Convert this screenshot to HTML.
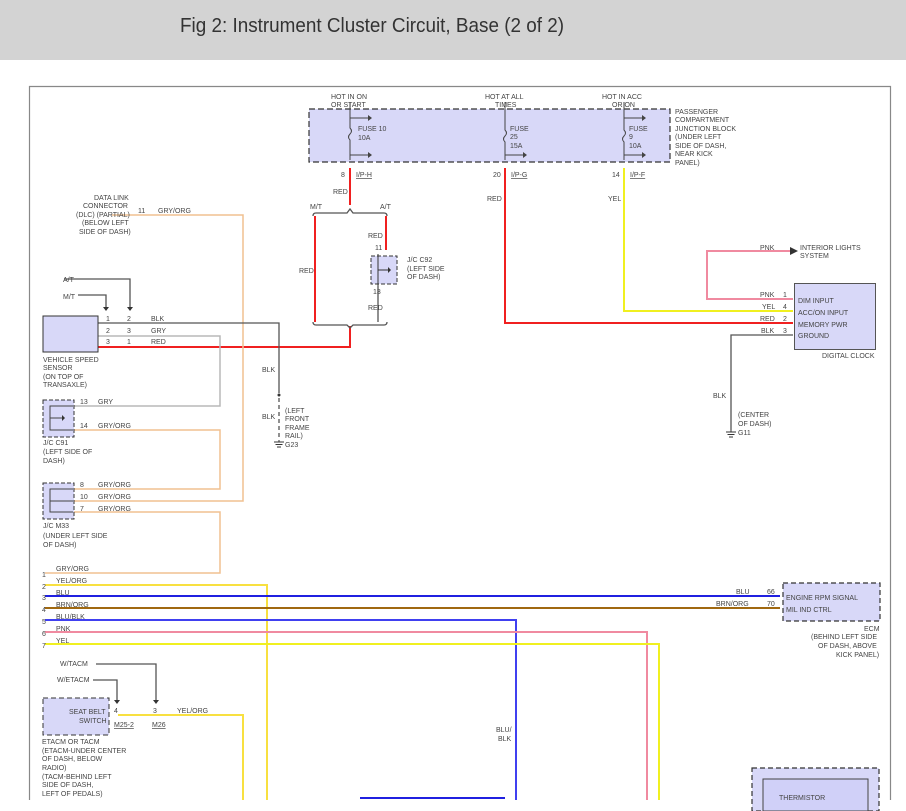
<!DOCTYPE html>
<html><head><meta charset="utf-8"><style>
html,body{margin:0;padding:0;background:#fff;}
svg{display:block;}
text{font-family:"Liberation Sans",sans-serif;font-size:7px;fill:#444;}
</style></head><body>
<svg width="906" height="811" viewBox="0 0 906 811" xmlns="http://www.w3.org/2000/svg">
<rect x="0" y="0" width="906" height="60" fill="#d3d3d3"/>
<text x="180" y="32" style="font-size:20px;fill:#333" textLength="384" lengthAdjust="spacingAndGlyphs">Fig 2: Instrument Cluster Circuit, Base (2 of 2)</text>
<rect x="0" y="60" width="906" height="751" fill="#fff"/>
<path d="M29.5 800 V86.5 H890.5 V800" fill="none" stroke="#888" stroke-width="1.2"/>

<rect x="309" y="109" width="361" height="53" fill="#d8d8f8" stroke="#333" stroke-dasharray="6,3" stroke-width="1.2"/>
<g stroke="#444" fill="none" stroke-width="1">
<path d="M350 102 V128 q3 3 0 6 q-3 3 0 6 V160 M350 118 H368 M350 155 H368"/>
<path d="M505 102 V130 q3 3 0 6 q-3 3 0 6 V160 M505 155 H523"/>
<path d="M624 102 V130 q3 3 0 6 q-3 3 0 6 V160 M624 118 H642 M624 155 H642"/>
</g>
<g fill="#444"><path d="M368 115 l4 3 l-4 3z M368 152 l4 3 l-4 3z M523 152 l4 3 l-4 3z M642 115 l4 3 l-4 3z M642 152 l4 3 l-4 3z"/></g>
<text x="331" y="99">HOT IN ON</text><text x="331" y="107">OR START</text>
<text x="485" y="99">HOT AT ALL</text><text x="495" y="107">TIMES</text>
<text x="602" y="99">HOT IN ACC</text><text x="612" y="107">OR ON</text>
<text x="358" y="131">FUSE 10</text><text x="358" y="140">10A</text>
<text x="510" y="131">FUSE</text><text x="510" y="139">25</text><text x="510" y="148">15A</text>
<text x="629" y="131">FUSE</text><text x="629" y="139">9</text><text x="629" y="148">10A</text>
<text x="675" y="114">PASSENGER</text><text x="675" y="122">COMPARTMENT</text><text x="675" y="131">JUNCTION BLOCK</text><text x="675" y="139">(UNDER LEFT</text><text x="675" y="148">SIDE OF DASH,</text><text x="675" y="156">NEAR KICK</text><text x="675" y="165">PANEL)</text>
<text x="341" y="177">8</text><text x="356" y="177" text-decoration="underline">I/P-H</text>
<text x="493" y="177">20</text><text x="511" y="177" text-decoration="underline">I/P-G</text>
<text x="612" y="177">14</text><text x="630" y="177" text-decoration="underline">I/P-F</text>

<g fill="none" stroke-width="2">
<path d="M350 168 V205" stroke="#f02020"/>
<path d="M315 216 V322" stroke="#f02020"/>
<path d="M386 216 V250" stroke="#f02020"/>
<path d="M350 326 V347 H45" stroke="#f02020"/>
<path d="M505 168 V323 H793" stroke="#f02020"/>
<path d="M624 168 V311 H793" stroke="#f0f020"/>
<path d="M793 299 H707 V251 H790" stroke="#f08aa0"/>
<path d="M112 215 H243 V501 H45" stroke="#f0c090" stroke-width="1.5"/>
<path d="M45 489 H220 V430 H45" stroke="#f0c090" stroke-width="1.5"/>
<path d="M45 512 H220 V573 H45" stroke="#f0c090" stroke-width="1.5"/>
<path d="M45 336 H220 V406 H45" stroke="#b8b8b8" stroke-width="1.5"/>
<path d="M45 585 H267 V800" stroke="#f8e040"/>
<path d="M45 596 H780" stroke="#2020e0"/>
<path d="M45 608 H780" stroke="#a06810"/>
<path d="M45 620 H516 V800" stroke="#4040f0"/>
<path d="M45 632 H647 V800" stroke="#f08aa0"/>
<path d="M45 644 H659 V800" stroke="#f0f020"/>
<path d="M118 715 H243 V800" stroke="#f8e040"/>
<path d="M360 798 H505" stroke="#2020e0"/>
</g>
<g fill="none" stroke="#555" stroke-width="1.3">
<path d="M45 323 H279 V393"/>
<path d="M279 398 V440" stroke-dasharray="4,3"/>
<path d="M793 335 H731 V430"/>
<path d="M313 216 q0-3 3-3 H347 l3-4 l3 4 H384 q3 0 3 3"/>
<path d="M313 322 q0 3 3 3 H347 l3 3 l3-3 H384 q3 0 3-3"/>
<path d="M378 286 V322"/>
<path d="M64 279 H130 V307 M78 295 H106 V307"/>
<path d="M96 664 H156 V700 M93 680 H117 V700"/>
</g>
<g fill="#333">
<path d="M790 247 l8 4 l-8 4z"/>
<path d="M127 307 h6 l-3 4z M103 307 h6 l-3 4z M114 700 h6 l-3 4z M153 700 h6 l-3 4z"/>
<circle cx="279" cy="395" r="1.5"/>
</g>
<g stroke="#333" stroke-width="1"><path d="M274 442 h10 M275.5 444.5 h7 M277 447 h4 M726 432 h10 M727.5 434.5 h7 M729 437 h4 M279 440 v2 M731 430 v2"/></g>
<text x="299" y="273">RED</text><text x="310" y="209">M/T</text><text x="380" y="209">A/T</text>
<text x="368" y="238">RED</text><text x="375" y="250">11</text><text x="373" y="294">13</text><text x="368" y="310">RED</text>
<text x="333" y="194">RED</text><text x="487" y="201">RED</text><text x="608" y="201">YEL</text>
<rect x="371" y="256" width="26" height="28" fill="#d8d8f8" stroke="#333" stroke-dasharray="4,2"/>
<path d="M378 254 V286 M378 270 H388" stroke="#333" fill="none"/><path d="M388 267 l3 3 l-3 3z" fill="#333"/>
<text x="407" y="262">J/C C92</text><text x="407" y="271">(LEFT SIDE</text><text x="407" y="279">OF DASH)</text>
<text x="94" y="200">DATA LINK</text><text x="83" y="208">CONNECTOR</text><text x="76" y="217">(DLC) (PARTIAL)</text><text x="82" y="225">(BELOW LEFT</text><text x="79" y="234">SIDE OF DASH)</text>
<text x="138" y="213">11</text><text x="158" y="213">GRY/ORG</text>
<text x="63" y="282">A/T</text><text x="63" y="299">M/T</text>
<rect x="43" y="316" width="55" height="36" fill="#d8d8f8" stroke="#333"/>
<text x="106" y="321">1</text><text x="127" y="321">2</text><text x="151" y="321">BLK</text>
<text x="106" y="333">2</text><text x="127" y="333">3</text><text x="151" y="333">GRY</text>
<text x="106" y="344">3</text><text x="127" y="344">1</text><text x="151" y="344">RED</text>
<text x="43" y="362">VEHICLE SPEED</text><text x="43" y="370">SENSOR</text><text x="43" y="379">(ON TOP OF</text><text x="43" y="387">TRANSAXLE)</text>
<text x="262" y="372">BLK</text><text x="262" y="419">BLK</text>
<text x="285" y="413">(LEFT</text><text x="285" y="421">FRONT</text><text x="285" y="430">FRAME</text><text x="285" y="438">RAIL)</text><text x="285" y="447">G23</text>
<rect x="43" y="400" width="31" height="37" fill="#d8d8f8" stroke="#333" stroke-dasharray="4,2"/>
<path d="M73 406 H50 V430 H73 M50 418 H62" stroke="#444" fill="none"/><path d="M62 415 l3 3 l-3 3z" fill="#333"/>
<text x="80" y="404">13</text><text x="98" y="404">GRY</text>
<text x="80" y="428">14</text><text x="98" y="428">GRY/ORG</text>
<text x="43" y="445">J/C C91</text><text x="43" y="454">(LEFT SIDE OF</text><text x="43" y="463">DASH)</text>
<rect x="43" y="483" width="31" height="36" fill="#d8d8f8" stroke="#333" stroke-dasharray="4,2"/>
<path d="M73 489 H50 V512 H73 M50 501 H73" stroke="#444" fill="none"/>
<text x="80" y="487">8</text><text x="98" y="487">GRY/ORG</text>
<text x="80" y="499">10</text><text x="98" y="499">GRY/ORG</text>
<text x="80" y="511">7</text><text x="98" y="511">GRY/ORG</text>
<text x="43" y="528">J/C M33</text><text x="43" y="538">(UNDER LEFT SIDE</text><text x="43" y="547">OF DASH)</text>
<text x="56" y="571">GRY/ORG</text><text x="56" y="583">YEL/ORG</text><text x="56" y="595">BLU</text><text x="56" y="607">BRN/ORG</text><text x="56" y="619">BLU/BLK</text><text x="56" y="631">PNK</text><text x="56" y="643">YEL</text>
<text x="42" y="577">1</text><text x="42" y="589">2</text><text x="42" y="600">3</text><text x="42" y="612">4</text><text x="42" y="624">5</text><text x="42" y="636">6</text><text x="42" y="648">7</text>
<text x="496" y="732">BLU/</text><text x="498" y="741">BLK</text>
<rect x="43" y="698" width="66" height="37" fill="#d8d8f8" stroke="#333" stroke-dasharray="5,3"/>
<text x="69" y="714">SEAT BELT</text><text x="79" y="723">SWITCH</text>
<text x="114" y="713">4</text><text x="153" y="713">3</text><text x="177" y="713">YEL/ORG</text>
<text x="114" y="727" text-decoration="underline">M25-2</text><text x="152" y="727" text-decoration="underline">M26</text>
<text x="60" y="666">W/TACM</text><text x="57" y="682">W/ETACM</text>
<text x="42" y="744">ETACM OR TACM</text><text x="42" y="753">(ETACM-UNDER CENTER</text><text x="42" y="761">OF DASH, BELOW</text><text x="42" y="770">RADIO)</text><text x="42" y="779">(TACM-BEHIND LEFT</text><text x="42" y="787">SIDE OF DASH,</text><text x="42" y="796">LEFT OF PEDALS)</text>
<rect x="794.5" y="283.5" width="81" height="66" fill="#d8d8f8" stroke="#555"/>
<text x="798" y="303">DIM INPUT</text><text x="798" y="315">ACC/ON INPUT</text><text x="798" y="327">MEMORY PWR</text><text x="798" y="338">GROUND</text>
<text x="760" y="297">PNK</text><text x="783" y="297">1</text>
<text x="762" y="309">YEL</text><text x="783" y="309">4</text>
<text x="760" y="321">RED</text><text x="783" y="321">2</text>
<text x="761" y="333">BLK</text><text x="783" y="333">3</text>
<text x="822" y="358">DIGITAL CLOCK</text>
<text x="760" y="250">PNK</text><text x="800" y="250">INTERIOR LIGHTS</text><text x="800" y="258">SYSTEM</text>
<text x="713" y="398">BLK</text><text x="738" y="417">(CENTER</text><text x="738" y="426">OF DASH)</text><text x="738" y="435">G11</text>
<rect x="783" y="583" width="97" height="38" fill="#d8d8f8" stroke="#333" stroke-dasharray="5,3" stroke-width="1.2"/>
<text x="786" y="600">ENGINE RPM SIGNAL</text><text x="786" y="612">MIL IND CTRL</text>
<text x="736" y="594">BLU</text><text x="767" y="594">66</text>
<text x="716" y="606">BRN/ORG</text><text x="767" y="606">70</text>
<text x="864" y="631">ECM</text><text x="811" y="639">(BEHIND LEFT SIDE</text><text x="818" y="648">OF DASH, ABOVE</text><text x="836" y="657">KICK PANEL)</text>
<rect x="752" y="768" width="127" height="43" fill="#d8d8f8" stroke="#333" stroke-dasharray="5,3" stroke-width="1.2"/>
<rect x="763" y="779" width="105" height="32" fill="#d0d0f8" stroke="#444"/>
<text x="779" y="800">THERMISTOR</text>
</svg>
</body></html>
